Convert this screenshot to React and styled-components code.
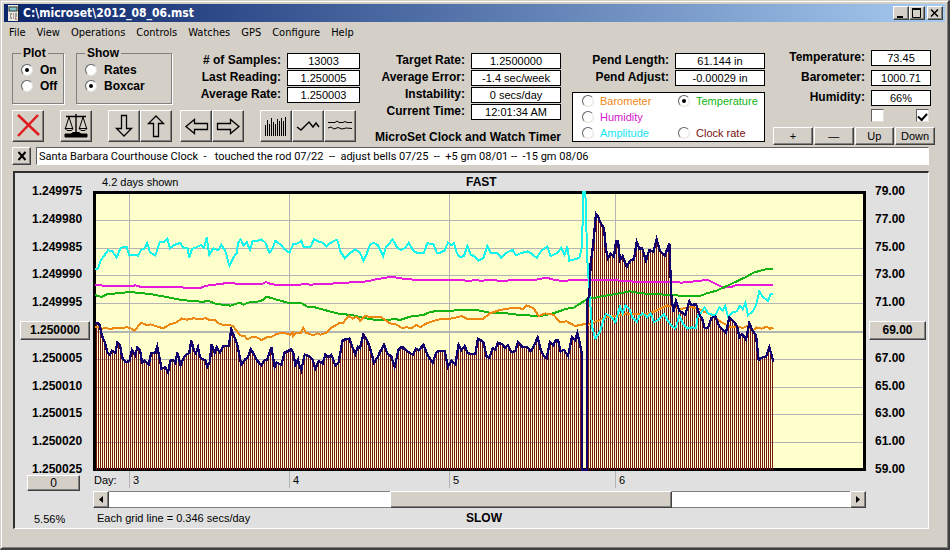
import React, { Fragment, useState } from "react";
import styled, { createGlobalStyle } from "styled-components";

const GlobalStyle = createGlobalStyle`
  * {
    box-sizing: border-box;
  }
  body {
    margin: 0;
    background: #d4d0c8;
    color: #000;
    font-family: "Liberation Sans", sans-serif;
    font-size: 12px;
    line-height: 14px;
  }
  button,
  input {
    font: inherit;
    color: inherit;
    margin: 0;
    padding: 0;
    border-radius: 0;
  }
`;

const Window = styled.div`
  display: flex;
  flex-direction: column;
  min-height: 100vh;
  padding: 2px;
  border: 1px solid #d4d0c8;
  border-right: 2px solid #404040;
  border-bottom: 2px solid #404040;
  box-shadow: inset 1px 1px #fff, inset -1px -1px #808080;
`;

const Raised = styled.button`
  display: flex;
  align-items: center;
  justify-content: center;
  background: #d4d0c8;
  border: 1px solid;
  border-color: #fff #404040 #404040 #fff;
  box-shadow: inset -1px -1px #808080;
`;

const TitleBar = styled.header`
  display: flex;
  align-items: center;
  height: 18px;
  margin: 1px;
  padding: 0 2px 0 3px;
  background: linear-gradient(to right, #0a246a, #a6caf0);
  color: #fff;
`;

const Title = styled.h1`
  flex: 1;
  margin: 0 0 0 2px;
  font: bold 12px/16px "DejaVu Sans Condensed", "DejaVu Sans", sans-serif;
`;

const TitleButton = styled(Raised)`
  width: 16px;
  height: 14px;
  margin-left: ${(p) => (p.$apart ? 2 : 0)}px;
`;

const Menu = styled.nav`
  display: flex;
  height: 20px;
`;

const MenuItem = styled.button`
  padding: 0 5px 0 6px;
  border: 0;
  background: none;
  font: 11px/18px "DejaVu Sans Condensed", "DejaVu Sans", sans-serif;
`;

const Controls = styled.section`
  display: grid;
  grid-template-columns: minmax(355px, 1fr) 189px 193px 162px;
  column-gap: 8px;
  height: 104px;
  padding: 0 11px 0 9px;
`;

const Column = styled.div`
  display: flex;
  flex-direction: column;
  padding-top: ${(p) => p.$top}px;
`;

const TopRow = styled.div`
  display: flex;
  gap: 12px;
  height: 57px;
`;

const Group = styled.fieldset`
  width: ${(p) => p.$width}px;
  min-width: 0;
  height: 57px;
  margin: 0;
  padding: 3px 0 0 8px;
  border: 1px solid #808080;
  box-shadow: 1px 1px #fff;
  font-weight: bold;
`;

const Legend = styled.legend`
  padding: 0 2px;
  line-height: 12px;
`;

const Choice = styled.label`
  display: flex;
  align-items: center;
  gap: ${(p) => p.$gap || 7}px;
  height: 16px;
  color: ${(p) => p.$color || "#000"};
`;

const Radio = styled.input`
  appearance: none;
  display: flex;
  align-items: center;
  justify-content: center;
  width: 12px;
  height: 12px;
  background: #fff;
  border: 1px solid;
  border-color: #606060 #e4e0d8 #e4e0d8 #606060;
  border-radius: 50%;

  &:checked::after {
    content: "";
    width: 4px;
    height: 4px;
    background: #000;
    border-radius: 50%;
  }
`;

const Check = styled.input`
  appearance: none;
  display: flex;
  align-items: center;
  justify-content: center;
  width: 13px;
  height: 13px;
  background: #fff;
  border: 1px solid;
  border-color: #606060 #e4e0d8 #e4e0d8 #606060;

  &:checked::after {
    content: "";
    width: 7px;
    height: 4px;
    border: solid #000;
    border-width: 0 0 2px 2px;
    transform: rotate(-48deg);
  }
`;

const Readouts = styled.div`
  display: grid;
  grid-template-columns: 1fr ${(p) => p.$box}px;
  grid-auto-rows: 16px;
  gap: ${(p) => p.$gap || 1}px 6px;
  flex: ${(p) => (p.$grow ? 1 : "none")};
  padding-top: ${(p) => p.$top || 0}px;
  padding-right: ${(p) => p.$right || 0}px;
`;

const Label = styled.label`
  font-weight: bold;
  text-align: right;
  white-space: nowrap;
`;

const Value = styled.input`
  width: 100%;
  min-width: 0;
  height: 16px;
  background: #fff;
  border: 1px solid #000;
  font-size: 11px;
  text-align: center;
`;

const Tools = styled.div`
  display: flex;
  margin-top: 6px;
`;

const Tool = styled(Raised)`
  width: 32px;
  height: 32px;
  margin-right: ${(p) => p.$after || 0}px;
`;

const Caption = styled.div`
  margin-top: 10px;
  font-weight: bold;
  white-space: nowrap;
`;

const TraceBox = styled.fieldset`
  display: grid;
  grid-template-columns: 96px 1fr;
  min-width: 0;
  height: 50px;
  margin: 6px 0 0;
  padding: 0 0 0 9px;
  background: #fff;
  border: 1px solid #000;
  font-size: 11px;
`;

const Ticks = styled.div`
  display: flex;
  justify-content: space-between;
  margin: 3px 6px 0 98px;
`;

const Keys = styled.div`
  display: grid;
  grid-template-columns: repeat(4, 1fr);
  column-gap: 1px;
  margin-top: 5px;
`;

const Key = styled(Raised)`
  height: 18px;
  font-size: 11px;
`;

const NoteRow = styled.div`
  display: flex;
  gap: 5px;
  padding: 0 17px 0 9px;
`;

const CloseNote = styled(Raised)`
  width: 19px;
  height: 18px;
`;

const Note = styled.input`
  flex: 1;
  height: 18px;
  padding-left: 2px;
  background: #fff;
  border: 1px solid;
  border-color: #606060 #fff #fff #606060;
  font-family: Roboto, "Liberation Sans", sans-serif;
  font-size: 11px;
  white-space: pre;
`;

const Panel = styled.main`
  display: grid;
  grid-template-columns: 78px 1fr 62px;
  margin: 6px 17px 0 10px;
  background: #e0e0e0;
  border: solid;
  border-width: 2px 1px 1px 2px;
  border-color: #303030 #fff #fff #303030;
`;

const Scale = styled.ol`
  display: flex;
  flex-direction: column;
  justify-content: space-between;
  align-items: flex-start;
  height: 290px;
  margin: 12px 0 0;
  padding: 0 0 0 ${(p) => p.$left}px;
  list-style: none;
  font-weight: bold;
  line-height: 12px;
`;

const Step = styled.li`
  height: 12px;
`;

const ScaleKey = styled(Raised)`
  width: ${(p) => p.$width}px;
  height: 19px;
  margin: -3px 0 0 ${(p) => p.$shift}px;
  font-weight: bold;
`;

const ZeroKey = styled(Raised)`
  width: 53px;
  height: 16px;
  margin-left: 12px;
`;

const Percent = styled.div`
  margin: 21px 0 0 19px;
  font-size: 11px;
`;

const Strip = styled.div`
  display: grid;
  grid-template-columns: 48% 1fr;
  align-items: center;
  height: ${(p) => p.$height}px;
`;

const StripText = styled.span`
  padding-left: ${(p) => p.$left}px;
  font-size: 11px;
`;

const Strong = styled.strong`
  padding-left: 2px;
`;

const Plot = styled.svg`
  display: block;
  width: 100%;
  height: 280px;
`;

const Days = styled.div`
  display: grid;
  grid-template-columns: 36fr 160fr 160fr 166fr 251fr;
  height: 17px;
  margin-bottom: 3px;
`;

const Day = styled.div`
  padding: 2px 0 0 ${(p) => (p.$first ? 1 : 3)}px;
  border-left: ${(p) => (p.$first ? "0" : "1px solid #b4b4b4")};
  font-size: 11px;
`;

const ScrollRow = styled.div`
  display: flex;
  height: 17px;
`;

const ScrollEnd = styled(Raised)`
  width: 16px;
`;

const Scroll = styled.input`
  appearance: none;
  flex: 1;
  min-width: 0;
  height: 17px;
  background: #fff;
  border-top: 1px solid #808080;
  border-bottom: 1px solid #808080;

  &::-webkit-slider-thumb {
    appearance: none;
    width: 282px;
    height: 17px;
    background: #d4d0c8;
    border: 1px solid;
    border-color: #fff #404040 #404040 #fff;
    box-shadow: inset -1px -1px #808080;
  }
`;

// Every block of readings starts at its own offset; three units to a pixel.
const TRACES = {
  humidity: {
    color: "#e619dc",
    blocks: [
      [-279, -78, "284,360 300,360 310,363 390,364 406,361 420,365 540,366 560,369 600,369 620,362 660,357 688,353"],
      [411, -33, "0,309 20,311 98,311 108,306 122,312 134,314 210,314 222,311 240,314 320,310 412,304 436,298 488,290 510,295 550,299 628,300"],
      [1041, -33, "0,300 70,300 80,303 110,300 125,303 140,300 180,302 285,300 318,293 350,301 375,303 400,299 520,299"],
      [1431, -33, "150,302 210,306 300,305 335,308 385,303 412,299 430,308 460,323 484,321 500,314 610,314"],
    ],
  },
  temperature: {
    color: "#12b312",
    blocks: [
      [-279, -78, "284,390 305,396 320,388 390,381 450,387 510,398 540,404 580,409 610,410 625,408 650,417 688,421"],
      [411, -33, "0,378 15,372 30,368 40,374 60,366 80,366 100,360 110,350 130,356 180,370 215,370 235,382 255,382 320,400 370,406 400,414 440,420 480,420 490,416 510,420 540,410 580,405 600,396 628,392"],
      [1041, -33, "30,394 50,390 110,390 150,398 200,400 240,405 300,408 340,400 380,386 400,384 440,358 490,348 530,342"],
      [1431, -33, "180,334 210,340 260,342 300,346 390,348 410,340 440,332 470,318 500,304 530,290 550,278 590,267 610,266"],
    ],
  },
  barometer: {
    color: "#ee8712",
    blocks: [
      [-279, -78, "286,486 300,486 306,492 316,488 330,492 350,488 366,490 380,486 392,490 404,497 414,484 424,474 440,480 452,478 470,484 490,490 510,478 530,472 545,460 560,464 580,460 600,462 618,460 630,466 645,466 660,478 698,482"],
      [-39, 327, "480,106 495,108 500,118 515,112 530,112 545,120 560,112 575,110 590,102 610,98 630,104 640,96"],
      [411, -33, "190,468 200,458 212,460 220,444 228,458 240,462 250,466 262,460 272,464 290,458 302,444 318,436 328,428 338,430 356,408 368,416 380,410 390,422 404,408 430,412 450,410 466,420 480,430 500,434 516,444 530,442 546,444 560,434 570,442 590,430 620,420"],
      [1041, -33, "0,418 30,416 50,412 65,408 80,416 130,416 150,400 180,390 215,384 250,386 260,376 280,384 296,408 316,400 340,404 360,426 380,424 405,438 430,433 445,434 470,424 500,412 540,406 560,400"],
      [1431, -33, "180,402 220,404 250,396 270,386 290,376 310,380 330,388 360,380 385,386 400,394 430,408 450,424 480,440 500,440 520,444 530,438 550,450 560,442 575,446 590,440 600,446 610,443"],
    ],
  },
  amplitude: {
    color: "#14f5ee",
    blocks: [
      [-279, -78, "286,314 294,310 302,286 314,270 324,256 336,258 350,278 362,248 380,246 388,272 400,270 414,272 424,254 432,252 442,234 450,262 466,272 480,230 492,230 502,220 510,250 522,240 540,234 552,250 562,248 568,278 576,252 592,246 602,240 612,248 620,218 628,270 640,250 654,256 664,240 676,258 688,302 700,278 710,264"],
      [411, -33, "24,190 32,178 40,196 50,186 60,210 68,182 84,182 94,178 106,188 118,218 128,206 136,182 152,194 164,208 178,218 190,192 204,190 214,182 220,200 242,200 252,178 264,184 278,188 290,200 300,190 314,182 322,180 332,216 344,234 356,222 376,208 390,218 400,242 410,222 420,194 430,188 444,196 460,228 468,200 480,188 488,178 500,200 512,210 526,204 536,188 550,212 560,218 582,218 592,190 610,192 620,218"],
      [1041, -33, "0,218 14,212 24,188 34,196 42,190 50,218 60,232 72,228 82,198 92,224 104,230 116,242 130,234 142,198 152,218 172,218 184,234 200,218 218,210 228,226 242,220 262,214 274,220 290,234 304,212 322,200 332,228 350,220 364,204 374,224 382,200 388,242 404,238 418,234 426,200 430,36 436,36 442,240 450,360 456,440 466,476 480,456 490,420 498,402 510,408 526,426 540,380 548,400 556,376 568,386 576,410"],
      [1431, -33, "200,426 208,408 218,400 232,412 242,400 252,426 264,420 282,402 292,420 304,436 316,446 328,408 340,432 352,446 366,442 378,444 384,404 392,400 404,382 414,400 426,404 436,406 448,382 458,392 466,378 474,410 490,396 500,394 510,378 518,388 526,368 534,406 548,394 558,376 568,334 578,350 594,362 602,342 610,340"],
    ],
  },
};

const RATE = {
  color: "#12006c",
  blocks: [
    [-39, 327, "46,68 58,72 66,108 75,128 82,158 90,165 96,152 106,158 112,128 120,134 126,172 136,186 148,184 156,150 166,166 172,142 180,150 186,188 194,182 206,194 214,158 226,158 232,140 240,180 244,206 256,202 264,216 272,180 280,180 286,188 292,158 302,196 312,172 320,164 328,158 334,122 342,152 348,160 354,142 360,172 368,178 376,180 382,200 390,186 394,132 404,158 410,142 420,158 430,138 446,138 454,88 462,108 472,134 484,194 496,178 504,172 512,148 520,160 530,180 544,196 552,182 562,178 574,142 584,200 590,188 604,194 614,158 634,148 640,160 646,194 654,178"],
    [411, -33, "206,550 214,570 224,524 240,530 248,540 256,566 266,544 278,550 286,524 294,532 304,524 316,556 326,546 338,480 358,476 366,498 376,522 384,500 390,504 400,464 410,478 420,504 432,548 444,530 450,516 462,494 472,520 484,530 494,560 506,508 516,500 532,514 548,524 558,506 566,512 580,494 592,524 608,548 620,516"],
    [1041, -33, "0,512 14,514 24,560 34,542 46,554 56,494 64,510 74,498 82,518 92,522 106,522 114,476 130,486 140,530 148,534 158,504 166,508 174,488 188,494 196,504 204,496 214,516 226,514 234,486 246,500 262,502 272,514 282,498 293,472 302,508 310,526 320,534 330,486 340,496 346,482 354,480 362,514 372,510 384,528 396,470 406,480 412,460 418,484 426,524 427,870 441,870 441,360 448,350 452,250 460,190 468,102 474,110 480,124 492,146 498,210 504,234 512,220 522,230 528,184 534,184 540,240 548,228 560,260 572,240 582,238"],
    [1431, -33, "200,186 208,206 216,204 228,242 238,210 250,216 260,178 270,214 284,228 298,190 304,345 310,396 318,362 328,392 346,404 358,364 364,376 378,372 388,404 396,414 404,444 414,444 424,414 436,410 448,440 458,450 468,458 478,412 492,426 502,440 508,472 516,462 528,478 538,430 548,452 558,466 566,540 578,532 588,530 598,502 610,545"],
  ],
};

const toPoints = (blocks) =>
  blocks
    .flatMap(([dx, dy, list]) =>
      list.split(" ").map((pair) => {
        const [x, y] = pair.split(",").map(Number);
        return `${x + dx},${y + dy}`;
      })
    )
    .join(" ");

const DAY_LINES = [108, 588, 1068, 1566];
const GRID_ROWS = [1, 2, 3, 4, 5, 6, 7, 8, 9];

// one bar every second pixel, up to the last reading
const BARS = Array.from({ length: 339 }, (_, i) => `M${9 + i * 6} 9h3v828h-3z`).join("");

const Chart = () => {
  const rate = toPoints(RATE.blocks);
  return (
    <Plot viewBox="0 0 2319 840" preserveAspectRatio="none" shapeRendering="crispEdges" role="img" aria-label="Clock rate plot">
      <defs>
        <clipPath id="under">
          <polygon points={`7,837 ${rate} 2041,837`} />
        </clipPath>
      </defs>
      <rect width="2319" height="840" fill="#000" />
      <rect x="9" y="9" width="2301" height="822" fill="#ffffcc" />
      {GRID_ROWS.map((n) => (
        <rect key={n} x="9" y={Math.round(n * 27.8 + 1) * 3} width="2301" height={n === 5 ? 6 : 3} fill="#b4b4b4" />
      ))}
      {DAY_LINES.map((x) => (
        <rect key={x} x={x} y="9" width="3" height="822" fill="#b4b4b4" />
      ))}
      <g clipPath="url(#under)">
        <path d={BARS} fill="#75180f" />
        {DAY_LINES.map((x) => (
          <rect key={x} x={x} y="9" width="3" height="822" fill="#f0ecd8" />
        ))}
      </g>
      {Object.entries(TRACES).map(([name, { color, blocks }]) => (
        <polyline key={name} points={toPoints(blocks)} fill="none" stroke={color} strokeWidth="6" />
      ))}
      <polyline points={rate} fill="none" stroke={RATE.color} strokeWidth="7" />
    </Plot>
  );
};

const Icon = ({ children, size = 28 }) => (
  <svg width={size} height={size} viewBox={`0 0 ${size} ${size}`} fill="none" stroke="#000" aria-hidden="true">
    {children}
  </svg>
);

const TOOLS = [
  {
    name: "Stop",
    after: 16,
    art: (
      <Fragment>
        <path d="M4 3 L25 23" stroke="#e01b1b" strokeWidth="2.5" />
        <path d="M24 3 L4 24" stroke="#e01b1b" strokeWidth="2.5" />
      </Fragment>
    ),
  },
  {
    name: "Balance",
    after: 16,
    art: (
      <Fragment>
        <path d="M14 2 V20 M4 4.5 H24" strokeWidth="1.4" />
        <path d="M7 5 L3.5 16 M7 5 L10.5 16 M21 5 L17.5 16 M21 5 L24.5 16" />
        <path d="M3 16.5 H11 L9.500 18.5 H5 Z M17 16.5 H25 L23 18.5 H19 Z" />
        <path d="M3 25 V22 H9 L11 20.5 H17 L19 22 H25 V25 Z" fill="#000" />
      </Fragment>
    ),
  },
  { name: "Scroll down", art: <path d="M11.5 3.5 H16.5 V16.5 H21.5 L14 24 L6.5 16.5 H11.5 Z" strokeWidth="1.3" /> },
  { name: "Scroll up", after: 8, art: <path d="M11.5 24.5 H16.5 V11.5 H21.5 L14 4 L6.5 11.5 H11.5 Z" strokeWidth="1.3" /> },
  { name: "Scroll left", art: <path d="M25.5 11.5 V17.5 H12.5 V21.5 L4 14.5 L12.5 7.5 V11.5 Z" strokeWidth="1.3" /> },
  { name: "Scroll right", after: 16, art: <path d="M3.5 11.5 V17.5 H16.5 V21.5 L25 14.5 L16.5 7.5 V11.5 Z" strokeWidth="1.3" /> },
  {
    name: "Bars",
    art: (
      <path
        d="M3.5 13 V24 M5.5 8 V24 M7.5 12 V24 M9.5 6 V24 M11.5 10 V24 M13.5 12 V24 M15.5 7 V24 M17.5 9 V24 M19.5 6 V24 M21.5 9 V24 M23.5 5 V24"
        shapeRendering="crispEdges"
      />
    ),
  },
  { name: "Line", art: <path d="M3 15 L7 18 L15 10 L19 15 L22 11 L25 15" strokeWidth="1.4" /> },
  {
    name: "Traces",
    art: (
      <Fragment>
        <path d="M2 10.5 H9 L11 9 L13 10.5 H17 L19 9.5 L21 10.5 H26" />
        <path d="M2 16 L5 15 L8 17 L12 15.5 L16 17 L20 16 L26 16.5" />
      </Fragment>
    ),
  },
];

const MENU = ["File", "View", "Operations", "Controls", "Watches", "GPS", "Configure", "Help"];

const TRACE_CHOICES = [
  ["Barometer", "#ee8712"],
  ["Temperature", "#12b312"],
  ["Humidity", "#d416cc"],
  null,
  ["Amplitude", "#14e6ee"],
  ["Clock rate", "#7b1212"],
];

const LEFT_SCALE = ["1.249975", "1.249980", "1.249985", "1.249990", "1.249995", "1.250000", "1.250005", "1.250010", "1.250015", "1.250020", "1.250025"];
const RIGHT_SCALE = ["79.00", "77.00", "75.00", "73.00", "71.00", "69.00", "67.00", "65.00", "63.00", "61.00", "59.00"];

const Readout = ({ label, value }) => {
  const id = label.replace(/\W/g, "");
  return (
    <Fragment>
      <Label htmlFor={id}>{label}</Label>
      <Value id={id} value={value} readOnly />
    </Fragment>
  );
};

const RadioGroup = ({ title, width, options, initial }) => {
  const [picked, setPicked] = useState(initial);
  return (
    <Group $width={width}>
      <Legend>{title}</Legend>
      {options.map((o) => (
        <Choice key={o}>
          <Radio type="radio" name={title} checked={picked === o} onChange={() => setPicked(o)} />
          {o}
        </Choice>
      ))}
    </Group>
  );
};

const App = () => {
  const [trace, setTrace] = useState("Temperature");
  const [note, setNote] = useState(
    "Santa Barbara Courthouse Clock  -   touched the rod 07/22  --  adjust bells 07/25  --  +5 gm 08/01 --  -15 gm 08/06"
  );
  const [position, setPosition] = useState(612);

  return (
    <Window>
      <GlobalStyle />
      <TitleBar>
        <svg width="14" height="16" viewBox="0 0 14 16" aria-hidden="true">
          <rect x="1" y="0" width="10" height="16" fill="#e8e8e0" />
          <rect x="2" y="2" width="8" height="4" fill="#7fc4c8" stroke="#303030" />
          <path d="M3 9h2M6 9h1M8 9h2M3 11h1M8 11h2M3 13h2M6 13h1M8 13h1" stroke="#505050" />
          <path d="M6 11h1M8 14h2" stroke="#c04030" />
          <path d="M11.5 1v15" stroke="#202020" />
        </svg>
        <Title>C:\microset\2012_08_06.mst</Title>
        <TitleButton aria-label="Minimize">
          <Icon size={10}>
            <path d="M1 9 H7" strokeWidth="2" />
          </Icon>
        </TitleButton>
        <TitleButton aria-label="Maximize">
          <Icon size={10}>
            <path d="M0.5 1 V9.5 H8.5 V1" />
            <path d="M0 1 H9" strokeWidth="2" />
          </Icon>
        </TitleButton>
        <TitleButton aria-label="Close" $apart>
          <Icon size={10}>
            <path d="M1 1.5 L8 8.5 M8 1.5 L1 8.5" strokeWidth="1.6" />
          </Icon>
        </TitleButton>
      </TitleBar>
      <Menu>
        {MENU.map((m) => (
          <MenuItem key={m}>{m}</MenuItem>
        ))}
      </Menu>
      <Controls>
        <Column $top={4}>
          <TopRow>
            <RadioGroup title="Plot" width={52} options={["On", "Off"]} initial="On" />
            <RadioGroup title="Show" width={96} options={["Rates", "Boxcar"]} initial="Boxcar" />
            <Readouts $box={73} $top={6} $right={7} $grow>
              <Readout label="# of Samples:" value="13003" />
              <Readout label="Last Reading:" value="1.250005" />
              <Readout label="Average Rate:" value="1.250003" />
            </Readouts>
          </TopRow>
          <Tools>
            {TOOLS.map((t) => (
              <Tool key={t.name} aria-label={t.name} $after={t.after}>
                <Icon>{t.art}</Icon>
              </Tool>
            ))}
          </Tools>
        </Column>
        <Column $top={10}>
          <Readouts $box={90} $right={3}>
            <Readout label="Target Rate:" value="1.2500000" />
            <Readout label="Average Error:" value="-1.4 sec/week" />
            <Readout label="Instability:" value="0 secs/day" />
            <Readout label="Current Time:" value="12:01:34 AM" />
          </Readouts>
          <Caption>MicroSet Clock and Watch Timer</Caption>
        </Column>
        <Column $top={10}>
          <Readouts $box={90}>
            <Readout label="Pend Length:" value="61.144 in" />
            <Readout label="Pend Adjust:" value="-0.00029 in" />
          </Readouts>
          <TraceBox aria-label="Right scale">
            {TRACE_CHOICES.map((c, i) =>
              c ? (
                <Choice key={c[0]} $gap={6} $color={c[1]}>
                  <Radio type="radio" name="trace" checked={trace === c[0]} onChange={() => setTrace(c[0])} />
                  {c[0]}
                </Choice>
              ) : (
                <span key={i} />
              )
            )}
          </TraceBox>
        </Column>
        <Column $top={7}>
          <Readouts $box={60} $gap={4} $right={4}>
            <Readout label="Temperature:" value="73.45" />
            <Readout label="Barometer:" value="1000.71" />
            <Readout label="Humidity:" value="66%" />
          </Readouts>
          <Ticks>
            <Check type="checkbox" aria-label="Hold low" />
            <Check type="checkbox" aria-label="Hold high" defaultChecked />
          </Ticks>
          <Keys>
            <Key>+</Key>
            <Key>—</Key>
            <Key>Up</Key>
            <Key>Down</Key>
          </Keys>
        </Column>
      </Controls>
      <NoteRow>
        <CloseNote aria-label="Clear note">
          <Icon size={10}>
            <path d="M1.5 1 L8.5 9 M8.5 1 L1.5 9" strokeWidth="2" />
          </Icon>
        </CloseNote>
        <Note aria-label="Note" value={note} onChange={(e) => setNote(e.target.value)} />
      </NoteRow>
      <Panel>
        <div>
          <Scale $left={17}>
            {LEFT_SCALE.map((v) => (
              <Step key={v}>
                {v === "1.250000" ? (
                  <ScaleKey $width={70} $shift={-12}>
                    {v}
                  </ScaleKey>
                ) : (
                  v
                )}
              </Step>
            ))}
          </Scale>
          <ZeroKey>0</ZeroKey>
          <Percent>5.56%</Percent>
        </div>
        <div>
          <Strip $height={18}>
            <StripText $left={9}>4.2 days shown</StripText>
            <Strong>FAST</Strong>
          </Strip>
          <Chart />
          <Days>
            <Day $first>Day:</Day>
            <Day>3</Day>
            <Day>4</Day>
            <Day>5</Day>
            <Day>6</Day>
          </Days>
          <ScrollRow>
            <ScrollEnd aria-label="Earlier">
              <svg width="4" height="7" viewBox="0 0 4 7">
                <path d="M4 0 V7 L0 3.5 Z" />
              </svg>
            </ScrollEnd>
            <Scroll
              type="range"
              aria-label="Position"
              min="0"
              max="1000"
              value={position}
              onChange={(e) => setPosition(Number(e.target.value))}
            />
            <ScrollEnd aria-label="Later">
              <svg width="4" height="7" viewBox="0 0 4 7">
                <path d="M0 0 V7 L4 3.5 Z" />
              </svg>
            </ScrollEnd>
          </ScrollRow>
          <Strip $height={20}>
            <StripText $left={4}>Each grid line = 0.346 secs/day</StripText>
            <Strong>SLOW</Strong>
          </Strip>
        </div>
        <Scale $left={9}>
          {RIGHT_SCALE.map((v) => (
            <Step key={v}>
              {v === "69.00" ? (
                <ScaleKey $width={57} $shift={-6}>
                  {v}
                </ScaleKey>
              ) : (
                v
              )}
            </Step>
          ))}
        </Scale>
      </Panel>
    </Window>
  );
};

export default App;
